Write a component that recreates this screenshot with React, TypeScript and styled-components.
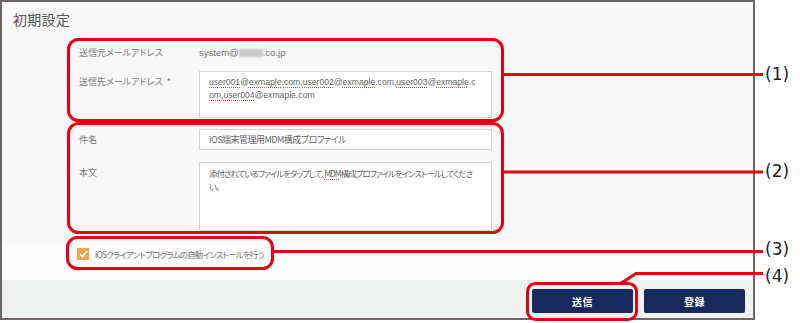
import React from 'react';
import styled, { createGlobalStyle } from 'styled-components';

const JP = `"Noto Sans CJK JP", "Noto Sans", sans-serif`;
const LATIN = `"Liberation Sans", "Noto Sans CJK JP", sans-serif`;
const RED = '#e60012';

const GlobalStyle = createGlobalStyle`
  html, body {
    margin: 0;
    padding: 0;
    background: #ffffff;
  }
  body {
    font-family: ${JP};
  }
`;

const Page = styled.div`
  position: relative;
  width: 800px;
  height: 323px;
  overflow: hidden;
`;

const Frame = styled.div`
  box-sizing: border-box;
  width: 755px;
  height: 320px;
  border: 2px solid #6c6665;
  display: flex;
  flex-direction: column;
  background: #f8f8f8;
`;

const Header = styled.div`
  height: 34px;
  display: flex;
  align-items: center;
  padding-left: 11px;
  font-size: 14px;
  color: #555;
  letter-spacing: 0.3px;
`;

const Form = styled.div`
  display: grid;
  grid-template-columns: 120px 293px;
  align-content: start;
  padding: 7px 0 12px 77px;
  height: 207px;
  box-sizing: border-box;
`;

const Label = styled.div<{ $top?: number }>`
  font-size: 9px;
  line-height: ${(p) => (p.$top ? 21 : 20)}px;
  margin-top: ${(p) => p.$top ?? 0}px;
  color: #7b7b7b;
  font-feature-settings: 'palt';
`;

const Required = styled.span`
  color: #e0393e;
  margin-left: 4px;
`;

const Value = styled.div`
  font-family: ${LATIN};
  font-size: 9.5px;
  line-height: 20px;
  color: #707070;
  display: flex;
  align-items: center;
`;

const Blurred = styled.span`
  display: inline-block;
  width: 24px;
  height: 8px;
  background: #c9c9c9;
  filter: blur(1.2px);
`;

const Field = styled.div<{ $top: number; $height: number }>`
  box-sizing: border-box;
  margin-top: ${(p) => p.$top}px;
  height: ${(p) => p.$height}px;
  border: 1px solid #cfd4d7;
  background: #ffffff;
  padding: 4px 9px;
  font-size: 8.5px;
  line-height: 13px;
  letter-spacing: -1.05px;
  color: #666;
  white-space: nowrap;
  font-feature-settings: 'palt';
`;

const SingleField = styled(Field)`
  display: flex;
  align-items: center;
  padding: 0 9px;
  font-size: 9px;
  letter-spacing: -0.5px;
`;

const MailLine = styled.div`
  font-family: ${LATIN};
  font-size: 8.65px;
  letter-spacing: 0;
`;

const Misspelt = styled.span`
  text-decoration: underline dotted #e8494c;
  text-decoration-thickness: 1px;
  text-underline-offset: 2px;
`;

const CheckRow = styled.div`
  height: 37px;
  box-sizing: border-box;
  background: #fcfcfc;
  display: flex;
  align-items: flex-start;
  padding: 5px 0 0 75px;
  gap: 6px;
  font-size: 8.5px;
  line-height: 12px;
  letter-spacing: -0.85px;
  color: #777;
  font-feature-settings: 'palt';
`;

const CheckBox = styled.span`
  width: 12px;
  height: 12px;
  border-radius: 1px;
  background: #f7a24f;
  display: inline-flex;
  align-items: center;
  justify-content: center;
`;

const Footer = styled.div`
  flex: 1;
  background: #f0f1f1;
  display: flex;
  justify-content: flex-end;
  align-items: flex-start;
  gap: 11px;
  padding: 9px 8px 0 0;
`;

const Button = styled.button`
  width: 101px;
  height: 24px;
  border: none;
  border-radius: 2px;
  background: #162a5e;
  color: #ffffff;
  font-family: ${JP};
  font-size: 10px;
  font-weight: 700;
  letter-spacing: 0.5px;
  padding: 0;
`;

const Overlay = styled.svg`
  position: absolute;
  left: 0;
  top: 0;
  pointer-events: none;
`;

const Callout = styled.span<{ $y: number }>`
  position: absolute;
  left: 765px;
  top: ${(p) => p.$y}px;
  font-family: "DejaVu Sans", sans-serif;
  font-size: 17px;
  line-height: 20px;
  color: #1d1d1d;
`;

const mail = (parts: string[]) =>
  parts.map((p, i) =>
    p.startsWith('~') ? <Misspelt key={i}>{p.slice(1)}</Misspelt> : <React.Fragment key={i}>{p}</React.Fragment>
  );

const Annotations = () => (
  <Overlay width={800} height={323} viewBox="0 0 800 323">
    <g fill="none" stroke={RED} strokeWidth={3}>
      <rect x={68.5} y={39.5} width={434} height={81} rx={10} />
      <rect x={68.5} y={123.5} width={434} height={109} rx={10} />
      <rect x={67.5} y={237.5} width={205} height={31} rx={10} />
      <rect x={527.5} y={283.5} width={109} height={36} rx={8} />
      <line x1={502} y1={74.5} x2={763} y2={74.5} />
      <line x1={502} y1={172} x2={763} y2={172} />
      <line x1={272} y1={251.5} x2={763} y2={251.5} />
      <polyline points="620,284 636,273.5 763,273.5" />
    </g>
  </Overlay>
);

export default function App() {
  return (
    <>
      <GlobalStyle />
      <Page>
        <Frame>
          <Header>初期設定</Header>
          <Form>
            <Label>送信元メールアドレス</Label>
            <Value>
              system@<Blurred />.co.jp
            </Value>

            <Label $top={8}>
              送信先メールアドレス<Required>*</Required>
            </Label>
            <Field $top={8} $height={47}>
              <MailLine>
                {mail(['~user001', '@', '~exmaple', '.', '~com', ',', '~user002', '@', '~exmaple', '.com,', '~user003', '@', '~exmaple', '.c'])}
              </MailLine>
              <MailLine>{mail(['~om', ',', '~user004', '@exmaple.com'])}</MailLine>
            </Field>

            <Label $top={11}>件名</Label>
            <SingleField $top={11} $height={21}>
              iOS端末管理用MDM構成プロファイル
            </SingleField>

            <Label $top={12}>本文</Label>
            <Field $top={12} $height={69}>
              <div>
                添付されているファイルをタップして、<Misspelt>MDM</Misspelt>構成プロファイルをインストールしてくださ
              </div>
              <div>い。</div>
            </Field>
          </Form>

          <CheckRow>
            <CheckBox>
              <svg width="9" height="8" viewBox="0 0 9 8">
                <polyline points="1,4.2 3.4,6.4 8,1.4" fill="none" stroke="#fff" strokeWidth="1.6" />
              </svg>
            </CheckBox>
            iOSクライアントプログラムの自動インストールを行う
          </CheckRow>

          <Footer>
            <Button>送信</Button>
            <Button>登録</Button>
          </Footer>
        </Frame>

        <Annotations />
        <Callout $y={64}>(1)</Callout>
        <Callout $y={161}>(2)</Callout>
        <Callout $y={239}>(3)</Callout>
        <Callout $y={266}>(4)</Callout>
      </Page>
    </>
  );
}
